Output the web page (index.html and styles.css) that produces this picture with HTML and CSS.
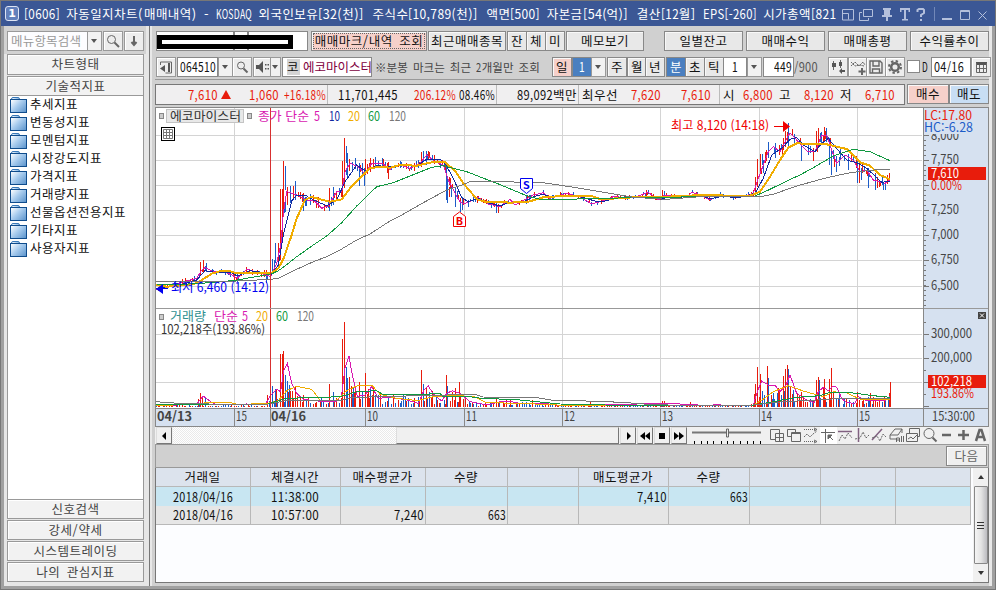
FILE: index.html
```
<!DOCTYPE html>
<html lang="ko">

<head>
    <meta charset="UTF-8">
    <title>[0606] 자동일지차트(매매내역)</title>
    <link rel="stylesheet" href="styles.css">
</head>

<body>
    <div class="window">
        <header class="titlebar">
            <span class="win-num">1</span>
            <h1 class="title">[0606] 자동일지차트(매매내역) - KOSDAQ 외국인보유[32(천)] 주식수[10,789(천)] 액면[500] 자본금[54(억)] 결산[12월] EPS[-260] 시가총액[821(</h1>
            <svg class="win-icons" width="154" height="24" viewBox="0 0 154 24">
                <path d="M2.500 18V7.500h11v10.500h-11M3 11.500h5.500v6M22 10.500h-2.500v8h9V16M23.500 7.500h9v7h-9z" />
                <path class="fill" d="M43 6h8v2h-1v5h2v2h-4v4h-2v-4h-4v-2h2V8h-1z" />
                <path class="fill" d="M60 6h10v4h-1.500V8H66v9h2v1.500h-6V17h2V8h-2.500v2H60z" />
                <path class="thick" d="M77.500 10V8l1.500-1h4l1 1v3l-3 2v2M81 17v2" />
                <path class="sep" d="M94.500 5v14" />
                <path class="thick" d="M102 17h10" />
                <path d="M120.500 8.500h9v9h-9zM120.500 9.500h9M138.500 9.500l8 8M146.500 9.500l-8 8" />
            </svg>
        </header>

        <div class="content">
            <aside class="side">
                <div class="search-row">
                    <div class="search">메뉴항목검색</div>
                    <button class="drop"></button>
                    <button class="sq"><svg width="16" height="16"><circle cx="6.500" cy="6.500" r="4" /><path d="M9.500 9.500l4.500 4.500" class="heavy" /></svg></button>
                    <button class="sq last"><svg width="16" height="16"><path d="M8 3v8M5.500 9L8 12l2.500-3" class="heavy" /></svg></button>
                </div>
                <div class="fold first">차트형태</div>
                <div class="fold">기술적지표</div>
                <ul class="tree">
                    <li>추세지표</li>
                    <li>변동성지표</li>
                    <li>모멘텀지표</li>
                    <li>시장강도지표</li>
                    <li>가격지표</li>
                    <li>거래량지표</li>
                    <li>선물옵션전용지표</li>
                    <li>기타지표</li>
                    <li>사용자지표</li>
                </ul>
                <div class="fold">신호검색</div>
                <div class="fold">강세/약세</div>
                <div class="fold">시스템트레이딩</div>
                <div class="fold">나의 관심지표</div>
            </aside>

            <main class="main">
                <div class="bar bar1">
                    <div class="account"><span class="acc-a"></span><span class="acc-b"></span><span class="acc-c"></span><i class="mask"></i></div>
                    <button class="btn pink dotted">매매마크/내역 조회</button>
                    <button class="btn">최근매매종목</button>
                    <button class="btn j">잔</button>
                    <button class="btn j">체</button>
                    <button class="btn">미</button>
                    <button class="btn w78">메모보기</button>
                    <button class="btn w79">일별잔고</button>
                    <button class="btn w79">매매수익</button>
                    <button class="btn w79">매매총평</button>
                    <button class="btn w79">수익률추이</button>
                </div>

                <div class="bar bar2">
                    <button class="sq"><svg width="16" height="16"><path d="M2.500 6v-3h11v11h-6" /><path class="fill" d="M7 6v7l-5-3.500zM10 4h2v9h-2z" /></svg></button>
                    <div class="field code">064510</div>
                    <button class="drop"></button>
                    <button class="sq"><svg width="16" height="16"><circle cx="7" cy="6.500" r="3.500" /><path d="M9.500 9.500l4 4" class="heavy" /></svg></button>
                    <button class="sq spk"><svg width="15" height="16"><path class="fill" d="M1 6h3l4-4v12l-4-4H1zM10 5h1.500v1.500H10zM12.500 5H14v1.500h-1.500zM10 9h1.500v1.500H10zM12.500 9H14v1.500h-1.500z" /></svg></button>
                    <button class="drop sm"></button>
                    <div class="field name"><b>코</b>에코마이스터</div>
                    <p class="note">※분봉 마크는 최근 2개월만 조회</p>
                    <button class="btn pink j">일</button>
                    <button class="btn blue j">1</button>
                    <button class="drop"></button>
                    <button class="btn j">주</button>
                    <button class="btn j">월</button>
                    <button class="btn">년</button>
                    <button class="btn blue j">분</button>
                    <button class="btn j">초</button>
                    <button class="btn j">틱</button>
                    <div class="field mid">1</div>
                    <button class="drop"></button>
                    <div class="field cnt">449</div>
                    <span class="total">/900</span>
                    <button class="sq"><svg width="16" height="16"><path d="M3.500 2v9M10.500 1v8" /><path class="fill" d="M2 4h4v4H2zM9 3h3v4H9zM9 12l3-3v2h3v2h-3v2z" /></svg></button>
                    <button class="sq"><svg width="16" height="16"><path d="M1 7l4-4 4 4 4-4 2 3M1 3l4 4 5-1 4 1" stroke-dasharray="2 .6" /><path d="M12 9v7M8.500 12.500h7" class="heavy" /></svg></button>
                    <button class="sq"><svg width="16" height="16"><path d="M2 2h10l2 2v10H2zM5 2v5h6V2M4.500 14v-4h7v4" class="disk" /></svg></button>
                    <button class="sq"><svg width="16" height="16"><circle cx="8" cy="8" r="3.800" class="gear" /><circle cx="8" cy="8" r="6" class="teeth" /></svg></button>
                    <i class="check"></i>
                    <span class="d">D</span>
                    <div class="field date">04/16</div>
                    <button class="sq"><svg width="16" height="16"><path class="fill" d="M3 3h11v3H3z" /><path d="M3.500 4v9.500h10V4M3 9.500h11M6.500 6v8M10.500 6v8" /></svg></button>
                </div>

                <div class="bar bar3">
                    <div class="quote">
                        <span class="up">7,610<i class="tri"></i></span>
                        <span class="up">1,060</span>
                        <span class="up line">+16.18%</span>
                        <span>11,701,445</span>
                        <span class="up">206.12%</span>
                        <span class="line">08.46%</span>
                        <span class="line">89,092백만</span>
                        <span>최우선</span>
                        <span class="up">7,620</span>
                        <span class="up line last-up">7,610</span>
                        <span>시</span>
                        <span class="up">6,800</span>
                        <span>고</span>
                        <span class="up">8,120</span>
                        <span>저</span>
                        <span class="up">6,710</span>
                    </div>
                    <button class="btn pink">매수</button>
                    <button class="btn sky">매도</button>
                </div>

                <svg class="chart" id="chart" width="834" height="320" viewBox="155 107 834 320"></svg>

                <div class="scroll">
                    <button class="sb"><svg width="14" height="14"><path d="M9 3v8L5 7z" /></svg></button>
                    <div class="track"></div>
                    <div class="thumb"></div>
                    <button class="sb"><svg width="14" height="14"><path d="M6 3v8l4-4z" /></svg></button>
                    <button class="sb"><svg width="14" height="14"><path d="M7 3v8L2 7zM12 3v8L7 7z" /></svg></button>
                    <button class="sb"><svg width="14" height="14"><path d="M4 4h6v6H4z" /></svg></button>
                    <button class="sb"><svg width="14" height="14"><path d="M2 3v8l5-4zM7 3v8l5-4z" /></svg></button>
                    <svg class="slider" width="81" height="17">
                        <path d="M4 5.500h69" stroke="#777" stroke-width="2" />
                        <path d="M6.500 14v3M13.500 14v3M19.500 14v3M25.500 14v3M33.500 14v3M39.500 14v3M45.500 14v3M52.500 14v3M59.500 14v3M65.500 14v3M72.500 14v3" stroke="#000" />
                        <path d="M38.500 2v8h2V2z" fill="#eee" stroke="#666" />
                    </svg>
                    <div class="tools">
                        <svg><path d="M1.500 2.500h9v10h-9z" /><path class="paper" d="M6.500 6.500h8v8h-8z" /><path d="M10.500 6v9M6 10.500h9" /></svg>
                        <svg><path d="M1.500 2.500h8v7h-8z" /><path class="paper" d="M5.500 5.500h9v9h-9z" /><path d="M5 6.500h10" /></svg>
                        <svg><path stroke-dasharray="1 1" d="M1 2.500h12M1 14.500h12" /><path stroke-dasharray="2 1" d="M1 10l3-3 3 3 3-3 4-3" /><path d="M11 1l3 1.500L11 4M11 13l3 1.500-3 1.500" /></svg>
                        <svg class="on"><path d="M1 5.500h14M5.500 2v14M8 8l5 5" /><path class="fill" d="M8 8h4l-4 4z" /></svg>
                        <svg><path d="M1 4.500h14" class="mauve" /><path stroke-dasharray="2 1" d="M2 14l3-6 3 4 3-6 4 5" /></svg>
                        <svg><path d="M4.500 1v14" class="mauve" /><path stroke-dasharray="2 1" d="M1 12l5-1 3-6 3 6 3-3" /></svg>
                        <svg><path d="M1 13L11 2" class="mauve" /><path stroke-dasharray="2 1" d="M1 11l5-2 3 5 3-7 3 3" /></svg>
                        <svg><path d="M2 8l5-6h7l-4 6zM2 8v4h6M14 2v4M8.500 15v-4h3v4M8.500 13h3M13.500 9v6M15.500 9v6" /></svg>
                        <svg><path d="M4.500 1.500h10v8h-10z" /><path class="paper" d="M1.500 6.500h11v8h-11z" /><path d="M3 12l3-2 2 2 4-4" /></svg>
                        <svg><circle cx="7" cy="6.500" r="5" /><path class="heavy" d="M10.500 10.500l4 4" /></svg>
                        <svg><path class="bold" d="M3 8h9" /></svg>
                        <svg><path class="bold" d="M2 8h11M7.500 3v10" /></svg>
                        <svg><path class="bold" d="M3 14L6.500 3h2L12 14M5 10h5" /></svg>
                    </div>
                </div>

                <div class="next-row"><button class="next">다음</button></div>

                <div class="trades">
                    <table>
                        <colgroup>
                            <col class="c95"><col class="c90"><col class="c85"><col class="c82"><col class="c71"><col class="c90"><col class="c81"><col class="c71"><col class="c75"><col class="c75">
                        </colgroup>
                        <tr><th>거래일</th><th>체결시간</th><th>매수평균가</th><th>수량</th><th></th><th>매도평균가</th><th>수량</th><th></th><th></th><th></th></tr>
                        <tr class="sel"><td class="c">2018/04/16</td><td class="c">11:38:00</td><td></td><td></td><td></td><td>7,410</td><td>663</td><td></td><td></td><td></td></tr>
                        <tr><td class="c">2018/04/16</td><td class="c">10:57:00</td><td>7,240</td><td>663</td><td></td><td></td><td></td><td></td><td></td><td></td></tr>
                    </table>
                    <div class="vbar"><i class="arrow"></i><div class="grip"><i></i><i></i><i></i></div><i class="arrow down"></i></div>
                </div>
            </main>
        </div>
    </div>

    <script src="chart.js"></script>
    <script src="text.js"></script>
</body>

</html>
```

FILE: text.js
```
// half-width cells: every latin letter or digit takes half of a hangul cell
function fitLatin(root) {
    const walker = document.createTreeWalker(root, NodeFilter.SHOW_TEXT);
    const nodes = [];
    while (walker.nextNode()) {
        const n = walker.currentNode;
        if (!n.parentElement.closest("svg, .win-num") && /[!-~]/.test(n.data)) nodes.push(n);
    }

    nodes.forEach(node => {
        const cell = node.parentElement.closest(".note") ? 5.5 : 6;
        const frag = document.createDocumentFragment();
        node.data.split(/([!-~]+)/).forEach(part => {
            if (!/[!-~]/.test(part)) {
                frag.append(part);
                return;
            }
            const span = document.createElement("span");
            span.className = "n";
            span.textContent = part;
            span.dataset.width = part.length * cell;
            frag.append(span);
        });
        node.replaceWith(frag);
    });

    document.querySelectorAll(".n").forEach(span => {
        const natural = span.getBoundingClientRect().width;
        const width = Number(span.dataset.width);
        span.style.width = width + "px";
        // the box is squeezed too, so widen it back with a negative margin
        const ratio = Math.min(1, width / natural);
        span.style.width = Math.max(natural, width) + "px";
        span.style.marginRight = Math.min(0, width - natural) + "px";
        span.style.transform = `scaleX(${ratio})`;
    });
}

fitLatin(document.querySelector(".window"));
```

FILE: chart.js
```
const RED = "#e81c0c";
const BLUE = "#1c5cc8";
const svg = document.getElementById("chart");
let out = "";

// points are kept in 1/3 px units, in three blocks: morning, midday, afternoon
function points(top, offsets, blocks) {
    const list = [];
    blocks.forEach((block, i) => {
        block.trim().split(" ").forEach(p => {
            const [x, y] = p.split(",").map(Number);
            list.push([150 + (x + offsets[i]) / 3, top + y / 3]);
        });
    });
    return list;
}

const price = (...b) => points(100, [0, 750, 1650], b);
const volume = (...b) => points(300, [0, 810, 1650], b);

function valueAt(list, x) {
    for (let i = 1; i < list.length; i++) {
        if (x <= list[i][0]) {
            const [x0, y0] = list[i - 1];
            const [x1, y1] = list[i];
            return y0 + (y1 - y0) * (x - x0) / (x1 - x0 || 1);
        }
    }
    return list[list.length - 1][1];
}

let seed = 77;
function rnd() {
    seed = (seed * 16807) % 2147483647;
    return seed / 2147483647;
}

function hline(x1, x2, y, c, w = 1) {
    out += `<rect x="${x1}" y="${y}" width="${x2 - x1}" height="${w}" fill="${c}"/>`;
}
function vline(x, y1, y2, c, w = 1) {
    out += `<rect x="${x}" y="${y1}" width="${w}" height="${y2 - y1}" fill="${c}"/>`;
}
function line(list, c, w = 1) {
    out += `<polyline points="${list.map(p => p[0].toFixed(1) + "," + p[1].toFixed(1)).join(" ")}" fill="none" stroke="${c}" stroke-width="${w}" shape-rendering="crispEdges"/>`;
}
function text(x, y, s, w, c, cls = "") {
    out += `<text x="${x}" y="${y}" textLength="${w}" lengthAdjust="spacingAndGlyphs" fill="${c}" class="${cls}">${s}</text>`;
}

const ma5 = price(
    "18,570 60,558 100,545 140,535 155,510 165,503 190,515 220,514 245,525 262,535 290,508 330,518 362,530 380,490 393,430 400,340 410,275 440,285 470,300 490,300 515,325 535,317 560,275 575,275 585,215 600,190 625,200 645,222 665,190 700,192 720,208 740,195",
    "0,195 30,205 60,190 80,165 105,185 130,195 145,240 165,280 180,305 190,312 235,293 265,312 300,320 330,298 345,315 400,285 430,278 450,295 500,280 540,290 575,312 600,305 640,290 700,293 745,277 775,300 795,285 860,292 875,277",
    "0,284 30,300 60,285 120,292 160,280 175,235 205,155 220,140 240,155 255,125 270,98 290,120 320,153 345,155 365,105 380,105 395,150 410,190 435,165 460,180 480,215 500,210 520,240 555,250 570,240");
const ma10 = price(
    "18,565 60,560 100,552 140,540 165,512 200,518 240,516 262,528 300,512 340,518 362,525 385,495 400,405 425,303 440,285 465,285 490,300 530,317 560,300 585,245 620,195 645,212 680,197 720,200",
    "0,195 50,197 80,178 120,178 135,190 160,235 185,293 205,305 235,295 265,308 300,318 330,306 370,306 400,290 430,283 450,290 500,285 540,290 585,303 610,305 650,292 700,292 750,288 780,295 860,290",
    "0,284 30,297 60,290 120,292 165,280 190,235 215,165 245,145 270,118 290,113 310,135 345,155 365,130 385,115 405,140 440,180 475,190 500,205 545,247 570,243");
const ma20 = price(
    "18,555 50,560 100,556 140,550 160,537 185,521 210,514 235,512 260,520 290,518 340,518 362,520 385,505 400,478 425,405 440,355 465,300 485,290 510,298 540,305 575,298 600,265 630,235 660,205 690,200 720,203",
    "0,195 50,197 95,187 135,187 165,212 190,250 230,297 255,305 290,305 330,308 385,305 430,292 500,287 575,288 600,297 660,295 720,290 800,290 870,287",
    "0,284 50,285 100,289 150,287 180,275 210,230 240,180 265,143 290,130 350,133 380,133 440,147 480,187 510,197 540,225 570,238");
const ma60 = price(
    "18,552 100,553 200,547 262,540 300,533 362,523 385,512 400,502 440,470 490,435 530,408 575,368 620,318 680,260 730,248",
    "0,240 95,202 130,197 200,215 290,250 370,283 390,290 430,300 500,298 600,295",
    "0,290 100,290 165,288 210,268 260,243 300,225 340,203 400,168 460,148 510,155 570,182");
const ma120 = price(
    "18,545 150,545 262,543 362,538 385,535 440,508 490,485 530,470 570,450 620,420 660,402 720,363",
    "0,348 70,308 140,270 180,257 215,243 380,247 430,248 510,260 600,275 700,292 800,298",
    "0,290 180,290 220,283 290,258 380,233 450,218 540,208 570,208");

// tall candles: x, high, low, colour
const candles = [
    [0, "400,183,330,r 391,267,480,r 406,198,270,b 413,262,315,r 421,258,310,b 437,243,300,b 362,432,520,r 376,430,490,b 368,478,522,b 160,480,515,r 152,487,525,r 169,490,515,b 577,183,290,r 583,114,265,r 589,138,190,b 593,160,230,b 539,264,320,r 551,262,300,b 461,285,332,b 628,190,258,b 643,205,257,b 646,178,225,r 660,175,215,r 714,185,237,r 385,428,500,r 396,267,420,r 262,520,545,b 348,515,548,b"],
    [750, "65,155,200,r 70,153,185,b 79,153,195,b 85,153,180,r 138,200,300,b 142,230,308,b 148,262,292,r 155,262,292,b 165,265,320,b 180,305,335,b 188,290,330,b 290,310,338,b 296,312,338,r 233,287,310,r 380,285,313,b 740,270,290,r 788,270,300,r 793,272,295,b"],
    [1650, "167,230,285,r 172,177,260,r 181,162,220,r 187,163,195,b 197,155,190,r 205,127,175,b 225,130,175,b 251,115,150,r 257,92,140,r 262,95,130,r 265,70,145,b 303,135,182,b 340,150,182,r 350,92,150,r 356,85,140,r 365,97,130,b 373,82,125,r 380,85,125,b 388,115,195,b 394,145,225,b 403,170,200,r 410,170,215,b 422,140,178,b 445,165,210,b 472,180,250,b 479,190,248,r 505,205,265,b 525,222,270,b 537,240,262,r 549,245,270,b 557,245,270,b 567,220,245,r"]
];
const swing = [[155, 4], [190, 5], [265, 6], [275, 14], [300, 12], [345, 11], [360, 11], [400, 8], [445, 9], [470, 7], [500, 5], [600, 4], [750, 4], [760, 13], [800, 12], [830, 12], [860, 12], [890, 10]];

// volume bars: x, top, colour
const bars = [
    [0, "152,279,r 158,291,r 146,297,r 166,293,b 353,285,r 362,228,r 367,258,b 376,268,b 380,270,r 391,162,r 397,162,r 400,153,r 406,225,b 412,243,b 418,255,b 427,272,r 436,260,r 461,285,r 475,290,r 539,252,r 551,275,b 577,117,r 583,66,r 589,201,b 593,234,b 598,230,r 605,258,r 610,265,b 616,270,r 628,246,r 637,275,b 646,219,r 655,268,r 661,262,b 669,258,r 730,283,r 760,285,b"],
    [810, "4,210,r 10,252,b 19,262,r 28,275,b 37,272,r 49,290,b 79,225,r 83,258,b 97,275,r 106,264,r 118,246,r 137,290,r 148,303,b 228,297,r 258,298,r 270,300,r 337,300,r 510,306,r 727,303,r 733,303,r 810,306,r"],
    [1650, "163,282,r 167,252,r 172,201,r 181,222,r 187,273,b 192,285,b 203,198,r 205,234,b 220,279,b 236,264,r 250,228,r 257,207,r 262,195,r 265,207,b 272,262,r 280,270,b 303,276,r 349,240,r 355,231,r 358,240,b 370,262,r 373,237,r 388,237,r 394,204,r 400,275,r 415,300,r 440,297,r 472,276,r 490,297,r 505,290,b 511,279,r 520,290,r 567,279,r 571,246,r"]
];
const flow = [[155, 2], [265, 2], [270, 12], [285, 18], [300, 12], [330, 9], [345, 17], [370, 15], [385, 10], [420, 10], [430, 14], [445, 9], [460, 13], [470, 5], [520, 6], [560, 2], [750, 2], [760, 14], [785, 19], [800, 13], [815, 7], [835, 17], [845, 8], [875, 10], [891, 11]];

// panes and grid
out += `<rect x="155" y="107" width="834" height="320" fill="#fff"/><rect x="923" y="107" width="65" height="301" fill="#d6e1f0"/><rect x="155" y="408" width="833" height="18" fill="#d6e1f0"/>`;
const hours = [[234, "15"], [365, "10"], [464, "11"], [562, "12"], [660, "13"], [759, "14"], [857, "15"]];
[135, 160, 185, 210, 235, 260, 286, 334, 358, 382].forEach(y => hline(156, 922, y, "#d4d4d4"));
hours.forEach(h => vline(h[0], 108, 408, "#d4d4d4"));

for (let i = 0; i < 449; i++) {
    const x = Math.round(156 + i * 1.635);
    const mid = valueAt(ma5, x);
    const s = valueAt(swing, x);
    const h = s * (0.3 + rnd() * 0.8);
    const c = rnd() > 0.5 ? RED : BLUE;
    const shift = (rnd() - 0.5) * s * 0.5;
    if (rnd() < 0.62) vline(x, Math.round(mid - h / 2 + shift), Math.round(mid + h / 2 + shift), c);
    const v = Math.max(1, Math.round(valueAt(flow, x) * (0.25 + rnd() * 0.75)));
    if (i % 4 !== 3) vline(x, 407 - v, 407, c);
}
candles.forEach(([dx, s]) => s.split(" ").forEach(k => {
    const [x, hi, lo, c] = k.split(",");
    vline(Math.floor(150 + (+x + dx) / 3), Math.round(100 + hi / 3), Math.round(100 + lo / 3), c === "r" ? RED : BLUE);
}));
bars.forEach(([dx, s]) => s.split(" ").forEach(k => {
    const [x, y, c] = k.split(",");
    const top = Math.round(300 + y / 3);
    vline(Math.floor(150 + (+x + dx) / 3), top, 407, c === "r" ? RED : BLUE);
}));

line(ma5, "#d818b0");
line(ma10, "#1028a0");
line(ma20, "#f0ac00", 2);
line(ma60, "#109840");
line(ma120, "#777");

line(volume(
    "18,318 140,312 160,288 182,305 200,315 290,312 345,315 362,285 380,268 392,275 400,215 412,190 425,250 440,280 460,298 520,305 560,303 575,285 585,205 597,168 607,225 622,290 645,285 665,260 685,295 720,292 770,300 805,310",
    "0,300 12,270 25,258 40,282 65,303 80,280 97,272 120,280 150,305 200,315 240,305 280,306 310,312 370,310 430,318 730,310 830,314",
    "0,318 50,314 100,318 160,315 172,275 185,243 205,255 225,255 240,275 258,255 270,225 290,280 320,300 342,308 355,275 370,262 385,272 400,258 410,262 425,295 440,308 465,310 475,290 500,302 520,300 555,303 570,288"), "#d818b0");
line(volume(
    "18,316 120,314 180,307 240,307 260,313 350,311 385,302 410,272 440,259 485,268 510,300 560,300 590,272 620,258 665,255 690,283 740,295 805,302",
    "0,300 40,290 100,287 160,289 200,308 300,310 430,316 560,318",
    "0,318 160,315 190,298 220,275 265,257 310,273 370,290 400,275 440,279 480,297 520,300 570,298"), "#f0ac00");
line(volume(
    "18,314 350,313 410,295 480,293 570,290 620,275 680,272 700,284",
    "0,284 60,280 70,290 150,290 190,296 280,298 420,312 650,317",
    "0,317 165,315 220,305 290,292 360,287 390,277 460,279 520,287 570,292"), "#109840");
line(volume(
    "18,305 100,311 250,313 360,312 400,303 570,302 600,293 680,290",
    "0,287 165,283 190,291 350,293 400,301 540,304 620,308 700,314",
    "0,317 160,315 250,305 350,300 410,296 570,295"), "#777");

// frame
vline(270, 108, 408, "#d83030");
hline(155, 989, 107, "#888");
hline(155, 989, 308, "#999");
hline(155, 989, 408, "#888");
hline(155, 989, 426, "#888");
vline(155, 107, 427, "#888");
vline(923, 107, 426, "#888");
vline(988, 107, 427, "#888");
for (let y = 140; y < 308; y += 5) hline(924, 926, y, "#777");
[346, 370, 394, 322].forEach(y => hline(924, 926, y, "#777"));
[135, 160, 185, 210, 235, 260, 286, 334, 358, 382, 406].forEach(y => hline(924, 929, y, "#777"));

// scales
text(931, 140, "8,000", 28, "#444");
text(931, 164, "7,750", 28, "#444");
text(931, 214, "7,250", 28, "#444");
text(931, 239, "7,000", 28, "#444");
text(931, 264, "6,750", 28, "#444");
text(931, 290, "6,500", 28, "#444");
out += `<rect x="924" y="109" width="63" height="25" fill="#d6e1f0"/><rect x="928" y="167" width="58" height="13" fill="${RED}"/><rect x="928" y="375" width="58" height="13" fill="${RED}"/>`;
text(924, 120, "LC:17.80", 48, RED);
text(924, 132, "HC:-6.28", 49, BLUE);
text(931, 178, "7,610", 28, "#fff");
text(931, 190, "0.00%", 31, RED);
text(931, 338, "300,000", 41, "#444");
text(931, 362, "200,000", 41, "#444");
text(931, 386, "102,218", 41, "#fff");
text(931, 398, "193.86%", 43, RED);
out += `<rect x="978" y="312" width="8" height="7" fill="#444"/><path d="M980 313.500l4 4M984 313.500l-4 4" stroke="#fff"/>`;

hours.forEach(h => {
    vline(h[0], 408, 426, "#888");
    text(h[0] + 2, 421, h[1], 11, "#444");
});
vline(270, 409, 426, "#888");
text(157, 421, "04/13", 35, "#444", "bold");
text(271, 421, "04/16", 35, "#444", "bold");
text(932, 421, "15:30:00", 43, "#444");

// legends
out += `<rect x="159.500" y="113.500" width="4" height="5" fill="#ccc" stroke="#888"/><rect x="247.500" y="113.500" width="4" height="5" fill="#ccc" stroke="#888"/><rect x="159.500" y="314.500" width="4" height="5" fill="#ccc" stroke="#888"/>`;
out += `<rect x="166.500" y="109.500" width="77" height="13" fill="#e8e8e8" stroke="#c4c4c4"/>`;
text(170, 121, "에코마이스터", 71, "#333");
text(258, 121, "종가 단순", 51, "#d818b0");
text(314, 121, "5", 6, "#d818b0");
text(329, 121, "10", 11, "#1028a0");
text(348, 121, "20", 12, "#f0ac00");
text(368, 121, "60", 12, "#109840");
text(389, 121, "120", 17, "#777");
out += `<rect x="161.500" y="127.500" width="13" height="13" fill="#fff" stroke="#000"/><path d="M163.500 129.500h9v9h-9zM163 132.500h10M163 135.500h10M166.500 129v10M169.500 129v10" fill="none" stroke="#777"/>`;
text(170, 321, "거래량", 36, "#309090");
text(214, 321, "단순", 24, "#d818b0");
text(242, 321, "5", 6, "#d818b0");
text(256, 321, "20", 12, "#f0ac00");
text(276, 321, "60", 12, "#109840");
text(297, 321, "120", 17, "#777");
text(161, 334, "102,218주(193.86%)", 104, "#333");

// marks
text(171, 292, "최저 6,460 (14:12)", 98, "#0000f0");
out += `<path d="M156 289l7-5v10zM163 288h5v1h-5z" fill="#0000f0"/>`;
text(671, 130, "최고 8,120 (14:18)", 98, "#f00000");
out += `<path d="M774 126h9v-5l7 5.500-7 5.500v-5h-9z" fill="#f00000"/>`;
out += `<path d="M453.500 216.500l6-4.500 6 4.500v10h-12z" fill="#fff" stroke="#f00000"/><path d="M520.500 178.500h12v10l-6 5-6-5z" fill="#fff" stroke="#0000f0"/>`;
text(456, 225, "B", 7, "#f00000", "mark");
text(523, 189, "S", 7, "#0000f0", "mark");

svg.innerHTML = out;
```

FILE: styles.css
```
* {
    box-sizing: border-box;
}

body {
    margin: 0;
    width: 996px;
    height: 590px;
    overflow: hidden;
    font-family: "Noto Sans CJK KR", sans-serif;
    font-size: 12.5px;
    letter-spacing: 0.5px;
    word-spacing: 2.6px;
    line-height: 16px;
    color: #111;
}

button {
    font: inherit;
    letter-spacing: inherit;
    word-spacing: inherit;
    color: inherit;
    padding: 0;
    margin: 0;
    border-radius: 0;
    white-space: nowrap;
    overflow: hidden;
}

.n {
    display: inline-block;
    font-size: 13px;
    line-height: 16px;
    letter-spacing: 0.4px;
    text-align: left;
    transform-origin: 0 50%;
    white-space: nowrap;
}

.window {
    height: 590px;
    border: 1px solid #777;
    background: #a0a0a0;
    overflow: hidden;
}

.titlebar {
    display: flex;
    align-items: center;
    height: 25px;
    padding-left: 4px;
    background: #3b5795;
    color: #fff;
}

.win-num {
    width: 14px;
    height: 15px;
    border: 1px solid #dde4f4;
    border-radius: 3px;
    background: #6280bc;
    font: bold 11px/13px "DejaVu Sans", sans-serif;
    text-align: center;
    letter-spacing: 0;
}

.title {
    width: 813px;
    margin: 0 0 0 5px;
    font-size: 12.5px;
    font-weight: normal;
    word-spacing: 2.3px;
    letter-spacing: 0.45px;
    white-space: nowrap;
    overflow: hidden;
}

.win-icons {
    margin-left: 3px;
    fill: none;
    stroke: #b4c0dc;
}

.win-icons .fill {
    fill: #b4c0dc;
    stroke: none;
}

.win-icons .thick {
    stroke-width: 2;
}

.win-icons .sep {
    stroke: #7288b8;
}

.content {
    display: flex;
    height: 560px;
    margin: 0 3px 0 3px;
    background: #e6e6e6;
}

.side {
    display: flex;
    flex-direction: column;
    width: 146px;
    padding: 0 5px 4px 3px;
    border-right: 1px solid #777;
}

.search-row {
    display: flex;
    height: 28px;
    margin: 0 -2px 0 -3px;
    padding: 5px 2px 3px 3px;
    background: #d2d2d2;
}

.search {
    width: 81px;
    padding-left: 3px;
    border: 1px solid #999;
    background: #fdfdff;
    color: #999;
    line-height: 18px;
    letter-spacing: 0.2px;
    white-space: nowrap;
    overflow: hidden;
}

.drop {
    position: relative;
    width: 15px;
    height: 20px;
    margin-left: -1px;
    border: 1px solid #999;
    background: #f2f2f2;
}

.drop::after {
    content: "";
    position: absolute;
    left: 3px;
    top: 7px;
    border: 3.5px solid transparent;
    border-top: 4px solid #555;
    border-bottom: 0;
}

.drop.sm {
    width: 11px;
}

.drop.sm::after {
    left: 1px;
}

.sq {
    display: flex;
    align-items: center;
    justify-content: center;
    width: 20px;
    height: 20px;
    border: 1px solid #999;
    background: #ededed;
    box-shadow: inset 1px 1px #fff;
}

.sq svg {
    flex: none;
    fill: none;
    stroke: #666;
}

.sq .fill {
    fill: #555;
    stroke: none;
}

.sq .heavy {
    stroke-width: 2;
}

.sq .disk {
    stroke-width: 1.4;
}

.sq .gear {
    stroke-width: 2.5;
}

.sq .teeth {
    stroke-width: 2;
    stroke-dasharray: 2.4 2.3;
}

.search-row .sq {
    margin-left: 1px;
}

.fold {
    flex: none;
    height: 20px;
    margin-top: 1px;
    border: 1px solid #999;
    background: #f2f2f2;
    box-shadow: inset 1px 1px #fff;
    color: #444;
    text-align: center;
    line-height: 17px;
}

.fold.first {
    height: 21px;
    margin-top: 0;
}

.tree {
    flex: 1;
    margin: 0 0 -1px;
    padding: 0 2px;
    border: 1px solid #999;
    border-width: 0 1px;
    background: #fff;
    list-style: none;
}

.tree li {
    position: relative;
    height: 18px;
    padding-left: 20px;
    line-height: 15px;
}

.tree li::before,
.tree li::after {
    content: "";
    position: absolute;
    left: 0;
    top: 3px;
    width: 15px;
    height: 12px;
    border: 1px solid #0f4c8c;
    background: linear-gradient(135deg, #fff, #a8ccee 45%, #5c94cc);
}

.tree li::before {
    left: 1px;
    top: 1px;
    width: 7px;
    height: 4px;
    border-color: #3878b8;
    border-radius: 2px 2px 0 0;
}

.main {
    width: 842px;
    background: #d0d0d0;
    border-left: 2px solid #e8e8e8;
    padding-left: 3px;
    border-right: 3px solid #e8e8e8;
}

.bar {
    display: grid;
    height: 20px;
    margin-left: 1px;
}

.bar1 {
    grid-template-columns: 155px 117px 79px 19px 19px 21px 98px 82px 82px 82px 79px;
    margin-top: 5px;
}

.bar2 {
    grid-template-columns: 21px 41px 14px 21px 17px 12px 93px 177px 20px 19px 16px 20px 18px 21px 19px 19px 19px 24px 16px 31px 34px 20px 18px 19px 22px 15px 9px 40px 18px;
    margin-top: 6px;
}

.bar3 {
    grid-template-columns: 752px 42px 40px;
    height: 21px;
    margin: 7px 0 2px 0;
    box-shadow: 0 -4px #d0d0d0, 0 -5px #999;
}

.btn {
    height: 20px;
    border: 1px solid #888;
    background: #e8e8e8;
    box-shadow: inset 1px 1px #f8f8f8;
    line-height: 18px;
    text-align: center;
}

.bar1 .btn:not(.j):not(.w79):not(.w78) {
    margin-right: 1px;
}

.j {
    margin-right: -1px;
}

.w78 {
    width: 78px;
}

.w79 {
    width: 79px;
}

.bar .pink {
    background: #f6d0ca;
}

.bar .blue {
    background: #4a7fc0;
    color: #fff;
    box-shadow: none;
}

.bar .sky {
    background: #c8def4;
}

.dotted {
    outline: 1px dotted #666;
    outline-offset: -3px;
}

.account {
    position: relative;
    display: flex;
    width: 152px;
    height: 20px;
}

.account span {
    border: 1px solid #888;
    background: #fff;
}

.acc-a {
    width: 78px;
}

.acc-b {
    width: 14px;
}

.acc-c {
    width: 60px;
}

.mask {
    position: absolute;
    left: 1px;
    top: 4px;
    width: 136px;
    height: 14px;
    border: 5px solid #000;
    background: #fff;
}

.field {
    height: 20px;
    border: 1px solid #888;
    background: #fff;
    line-height: 18px;
    white-space: nowrap;
    overflow: hidden;
}

.code {
    padding-left: 2px;
}

.bar2 .drop {
    margin-left: 0;
}

.bar2 .spk {
    width: 18px;
    margin-left: 0;
}

.bar2 .name {
    width: 90px;
    padding-left: 4px;
    color: #800040;
    letter-spacing: 0;
}

.name b {
    display: inline-block;
    width: 13px;
    height: 16px;
    margin-right: 3px;
    background: #d4d4d4;
    color: #111;
    font-weight: normal;
    line-height: 15px;
}

.note {
    margin: 0;
    color: #444;
    font-size: 11.5px;
    letter-spacing: 0.1px;
    word-spacing: 1.6px;
    line-height: 20px;
    white-space: nowrap;
}

.note .n {
    font-size: 12px;
}

.bar2 .btn {
    width: 20px;
}

.mid {
    text-align: center;
}

.cnt {
    padding-right: 1px;
    text-align: right;
}

.total {
    color: #555;
    line-height: 20px;
}

.check {
    width: 13px;
    height: 13px;
    margin: 3px 0 0 0;
    border: 1px solid #888;
    background: #fff;
}

.d {
    line-height: 19px;
}

.date {
    padding-left: 2px;
}

.quote {
    display: grid;
    grid-template-columns: 75px 48px 49px 70px 58px 41px 82px 39px 43px 59px 15px 38px 18px 43px 18px 43px;
    width: 750px;
    height: 21px;
    border: 1px solid #777;
    background: #f0eff0;
    line-height: 19px;
    text-align: right;
    white-space: nowrap;
}

.quote > span {
    display: flex;
    align-items: center;
    justify-content: flex-end;
}

.up {
    color: #e81c0c;
}

.line {
    padding-right: 1px;
    border-right: 1px solid #bbb;
}

.quote .last-up {
    padding-right: 8px;
}

.tri {
    margin-left: 3px;
    border: 5px solid transparent;
    border-top: 0;
    border-bottom: 9px solid #e81c0c;
}

.chart {
    display: block;
}

.chart text {
    letter-spacing: 0;
    word-spacing: 0;
}

.chart .bold {
    font-weight: bold;
}

.chart .mark {
    font: bold 11px "DejaVu Sans Mono", monospace;
}

.scroll {
    display: flex;
    height: 17px;
    width: 834px;
    padding-left: 1px;
    background: #f0f0f0;
    overflow: hidden;
}

.sb {
    flex: none;
    width: 16px;
    height: 17px;
    margin-right: 1px;
    border: 1px solid #777;
    border-top-color: #ddd;
    border-left-color: #ddd;
    background: #f0f0f0;
}

.sb svg {
    display: block;
}

.track {
    flex: none;
    width: 223px;
    background: repeating-conic-gradient(#fff 0 25%, #eaeaea 0 50%) 0 0 / 2px 2px;
}

.thumb {
    flex: none;
    width: 223px;
    margin-right: 1px;
    border: 1px solid #777;
    border-top-color: #ddd;
    border-left-color: #ddd;
}

.slider {
    flex: none;
    fill: none;
}

.tools {
    display: flex;
}

.tools svg {
    flex: none;
    width: 17px;
    height: 17px;
    fill: none;
    stroke: #666;
}

.tools .on {
    background: #fff;
}

.tools .fill {
    fill: #666;
}

.tools .paper {
    fill: #f0f0f0;
}

.tools .mauve {
    stroke: #806080;
    stroke-width: 1.5;
}

.tools .heavy {
    stroke-width: 2;
}

.tools .bold {
    stroke-width: 2.5;
}

.next-row {
    height: 24px;
    padding: 1px 1px 0 0;
    border: 1px solid #999;
}

.next {
    display: block;
    width: 41px;
    height: 20px;
    margin-left: auto;
    border: 1px solid #888;
    background: #efefef;
    box-shadow: inset 1px 1px #fff;
    color: #666;
}

.trades {
    display: flex;
    justify-content: space-between;
    height: 115px;
    border: 1px solid #777;
    border-top: 0;
    background: #fcfdff;
}

table {
    width: 815px;
    height: 57px;
    border-collapse: separate;
    border-spacing: 0;
    table-layout: fixed;
}

.c95 { width: 95px; }
.c90 { width: 90px; }
.c85 { width: 85px; }
.c82 { width: 82px; }
.c71 { width: 71px; }
.c81 { width: 81px; }
.c75 { width: 75px; }

tr {
    height: 19px;
    background: #e6e6e6;
}

th,
td {
    height: 19px;
    padding: 0 1px 0 0;
    border-right: 1px solid #b8b8b8;
    font-weight: normal;
    text-align: right;
    line-height: 16px;
}

th {
    background: #dce3ed;
    border-bottom: 1px solid #b8b8b8;
    text-align: center;
}

tr:last-child td {
    border-bottom: 1px solid #b8b8b8;
}

.sel {
    background: #c8e6f2;
}

td.c {
    text-align: center;
}

.vbar {
    display: flex;
    flex-direction: column;
    align-items: center;
    width: 15px;
    background: #f0f0f0;
}

.arrow {
    margin: 7px 0;
    border: 3.5px solid transparent;
    border-top: 0;
    border-bottom: 4px solid #333;
}

.arrow.down {
    margin: auto 0 7px;
    transform: rotate(180deg);
}

.grip {
    display: flex;
    flex-direction: column;
    align-items: center;
    justify-content: center;
    gap: 2px;
    width: 14px;
    height: 78px;
    border: 1px solid #888;
    border-radius: 1px;
    background: linear-gradient(90deg, #f4f4f4, #e4e4e4 50%, #bcbcc0);
}

.grip i {
    width: 7px;
    height: 1px;
    background: #333;
}
```
